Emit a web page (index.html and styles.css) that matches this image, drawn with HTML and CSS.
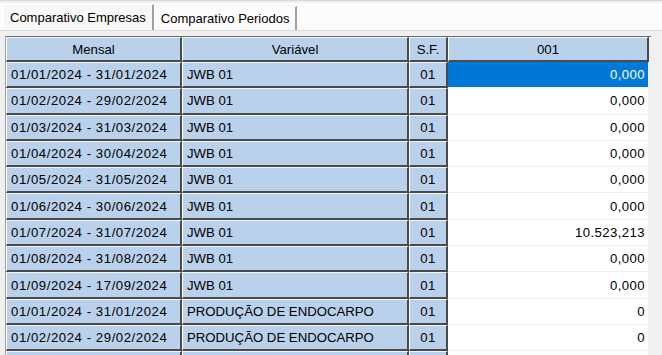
FILE: index.html
```html
<!DOCTYPE html>
<html>
<head>
<meta charset="utf-8">
<link rel="stylesheet" href="styles.css">
</head>
<body>
<div class="topstrip"></div>
<div class="tabs">
  <div class="tab active">Comparativo Empresas</div>
  <div class="tab">Comparativo Periodos</div>
</div>
<div class="panel">
  <div class="grid">
    <div class="row head">
      <div class="c c1 fx center">Mensal</div>
      <div class="c c2 fx center">Variável</div>
      <div class="c c3 fx center">S.F.</div>
      <div class="c c4 fx center">001</div>
    </div>
    <div class="row">
      <div class="c c1 fx">01/01/2024 - 31/01/2024</div>
      <div class="c c2 fx">JWB 01</div>
      <div class="c c3 fx center">01</div>
      <div class="c c4 val sel">0,000</div>
    </div>
    <div class="row">
      <div class="c c1 fx">01/02/2024 - 29/02/2024</div>
      <div class="c c2 fx">JWB 01</div>
      <div class="c c3 fx center">01</div>
      <div class="c c4 val">0,000</div>
    </div>
    <div class="row">
      <div class="c c1 fx">01/03/2024 - 31/03/2024</div>
      <div class="c c2 fx">JWB 01</div>
      <div class="c c3 fx center">01</div>
      <div class="c c4 val">0,000</div>
    </div>
    <div class="row">
      <div class="c c1 fx">01/04/2024 - 30/04/2024</div>
      <div class="c c2 fx">JWB 01</div>
      <div class="c c3 fx center">01</div>
      <div class="c c4 val">0,000</div>
    </div>
    <div class="row">
      <div class="c c1 fx">01/05/2024 - 31/05/2024</div>
      <div class="c c2 fx">JWB 01</div>
      <div class="c c3 fx center">01</div>
      <div class="c c4 val">0,000</div>
    </div>
    <div class="row">
      <div class="c c1 fx">01/06/2024 - 30/06/2024</div>
      <div class="c c2 fx">JWB 01</div>
      <div class="c c3 fx center">01</div>
      <div class="c c4 val">0,000</div>
    </div>
    <div class="row">
      <div class="c c1 fx">01/07/2024 - 31/07/2024</div>
      <div class="c c2 fx">JWB 01</div>
      <div class="c c3 fx center">01</div>
      <div class="c c4 val">10.523,213</div>
    </div>
    <div class="row">
      <div class="c c1 fx">01/08/2024 - 31/08/2024</div>
      <div class="c c2 fx">JWB 01</div>
      <div class="c c3 fx center">01</div>
      <div class="c c4 val">0,000</div>
    </div>
    <div class="row">
      <div class="c c1 fx">01/09/2024 - 17/09/2024</div>
      <div class="c c2 fx">JWB 01</div>
      <div class="c c3 fx center">01</div>
      <div class="c c4 val">0,000</div>
    </div>
    <div class="row">
      <div class="c c1 fx">01/01/2024 - 31/01/2024</div>
      <div class="c c2 fx">PRODUÇÃO DE ENDOCARPO</div>
      <div class="c c3 fx center">01</div>
      <div class="c c4 val">0</div>
    </div>
    <div class="row">
      <div class="c c1 fx">01/02/2024 - 29/02/2024</div>
      <div class="c c2 fx">PRODUÇÃO DE ENDOCARPO</div>
      <div class="c c3 fx center">01</div>
      <div class="c c4 val">0</div>
    </div>
    <div class="row">
      <div class="c c1 fx"></div>
      <div class="c c2 fx"></div>
      <div class="c c3 fx"></div>
      <div class="c c4 val"></div>
    </div>
  </div>
</div>
</body>
</html>
```
FILE: styles.css
```css
html, body {
  margin: 0;
  padding: 0;
  background: #f0f0f0;
  font-family: "Liberation Sans", sans-serif;
  font-size: 13px;
  color: #000;
  overflow: hidden;
  width: 662px;
  height: 355px;
}
.topstrip {
  height: 2px;
  border-top: 1px solid #d8d8d8;
  background: #f0f0f0;
}
.tabs {
  display: flex;
  height: 27px;
  padding-left: 3px;
  border-bottom: 1px solid #d9d9d9;
  background: #fcfcfc;
}
.tab {
  display: flex;
  align-items: center;
  padding: 0 6px;
  border-top: 1px solid #fff;
  border-left: 1px solid #fff;
  border-right: 2px solid #a0a0a0;
  margin-top: 3px;
  font-size: 13px;
}
.tab.active {
  margin-top: 1px;
  background: #f7f7f7;
}
.panel {
  padding: 5px 0 0 5px;
}
.grid {
  border-left: 1px solid #a0a0a0;
  width: 645px;
  font-size: 13.2px;
}
.row {
  display: flex;
  height: 26.3px;
}
.row.head {
  height: 25px;
  border-top: 1px solid #696969;
}
.c {
  box-sizing: border-box;
  display: flex;
  align-items: center;
  padding: 0 4px;
  white-space: nowrap;
  overflow: hidden;
}
.fx {
  background: #b9d1ea;
  border-right: 2px solid #4a4a4a;
  border-bottom: 2px solid #4a4a4a;
  border-left: 1px solid #fff;
  border-top: 1px solid #f0f6fc;
}
.c1 { width: 176px; letter-spacing: 0.55px; }
.c2 { width: 227px; }
.c3 { width: 39px; letter-spacing: 0.3px; }
.c4 { width: 201px; letter-spacing: 0.4px; }
.head .c { letter-spacing: 0; }
.center { justify-content: center; }
.val {
  background: #fff;
  justify-content: flex-end;
  border-right: 1px solid #f0f0f0;
  border-bottom: 1px solid #f0f0f0;
  padding-right: 3px;
}
.val.sel {
  background: #0078d7;
  color: #fff;
}
.head .c4 {
  border-right: 2px solid #4a4a4a;
}
```
